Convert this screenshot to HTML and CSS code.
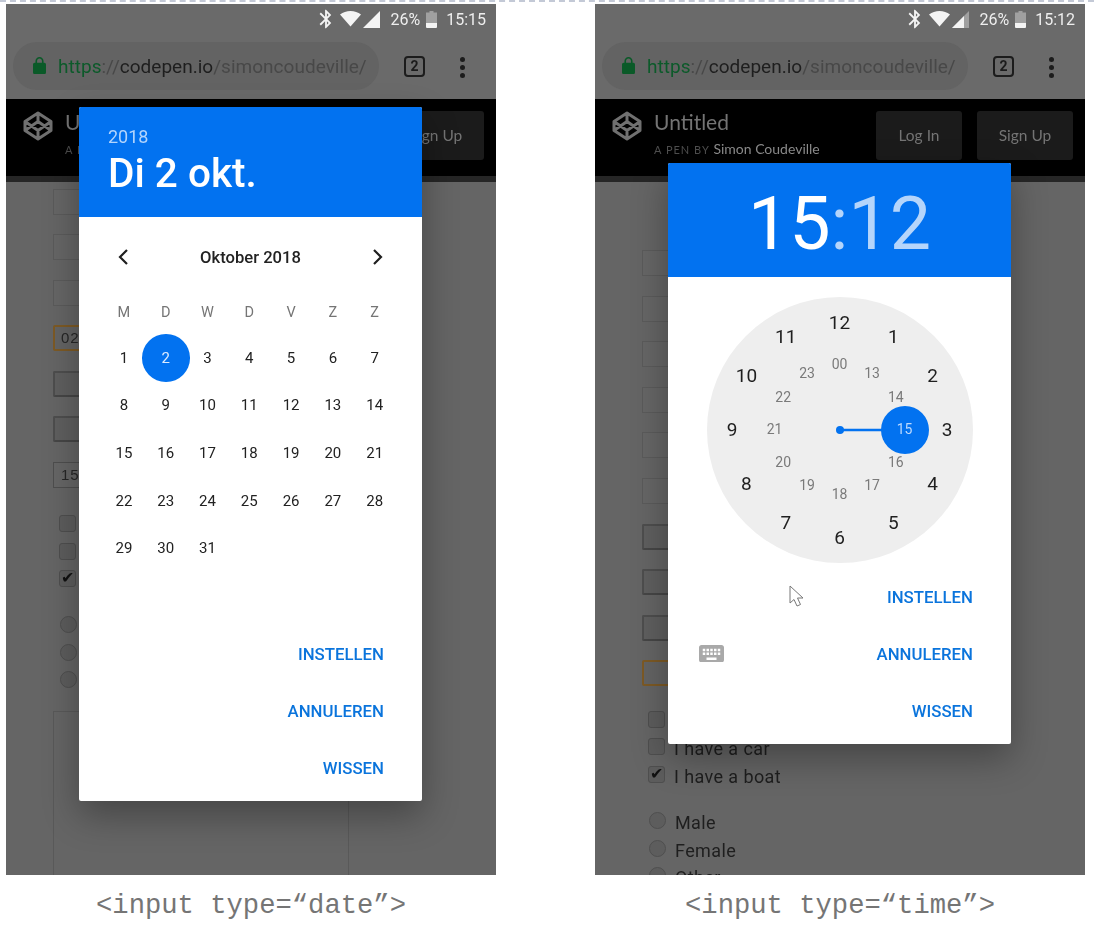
FILE: index.html
```html
<!DOCTYPE html>
<html lang="nl">
<head>
<meta charset="utf-8">
<title>input type date and time</title>
<link rel="stylesheet" href="styles.css">
</head>
<body>
<div class="guide"></div>
<main class="stage">

<section class="demo">
  <div class="phone">
    <div class="status">
      <svg class="i-bt" viewBox="0 0 24 24"><path d="M17.71 7.71L12 2h-1v7.59L6.41 5 5 6.41 10.59 12 5 17.59 6.41 19 11 14.41V22h1l5.71-5.71-4.3-4.29 4.3-4.29zM13 5.83l1.88 1.88L13 9.59V5.83zm1.88 10.46L13 18.17v-3.76l1.88 1.88z"/></svg>
      <svg class="i-wifi" viewBox="0 0 21 16"><path d="M10.5 15.5 0 3.6C3 1.2 6.500 0 10.500 0S18 1.200 21 3.600z"/></svg>
      <svg class="i-signal" viewBox="0 0 17 17"><path d="M17 0v17H0z"/></svg>
      <span class="pct">26%</span>
      <svg class="i-batt" viewBox="0 0 11 17"><path class="batt-empty" d="M3.500 0h4v1.500H11V12H0V1.500h3.500z"/><path d="M0 12h11v4a1 1 0 0 1-1 1H1a1 1 0 0 1-1-1z"/></svg>
      <span class="clock-text">15:15</span>
    </div>
    <div class="chrome">
      <div class="pill">
        <svg class="i-lock" viewBox="4 1 16 21"><path d="M18 8h-1V6c0-2.760-2.240-5-5-5S7 3.240 7 6v2H6c-1.100 0-2 .9-2 2v10c0 1.100.9 2 2 2h12c1.100 0 2-.9 2-2V10c0-1.100-.9-2-2-2zM9 6c0-1.660 1.340-3 3-3s3 1.340 3 3v2H9V6z"/></svg>
        <span class="url"><span class="u-green">https</span><span class="u-dim">://</span><span class="u-host">codepen.io</span><span class="u-dim">/simoncoudeville/</span></span>
      </div>
      <span class="tabs">2</span>
      <span class="menu"><i></i><i></i><i></i></span>
    </div>
    <header class="pen">
      <svg class="pen-logo" viewBox="0 0 30 30"><path d="M15 2 28 10.500v9L15 28 2 19.500v-9zM15 2v8.500M15 19.500V28M2 10.500l13 9 13-9M2 19.500l13-9 13 9"/></svg>
      <div class="pen-title">
        <div class="pen-name">Untitled</div>
        <div class="pen-by"><span class="pen-a">A PEN BY</span> <span class="pen-author">Simon Coudeville</span></div>
      </div>
      <span class="pen-btn pen-login">Log In</span>
      <span class="pen-btn pen-signup">Sign Up</span>
    </header>
    <div class="form form-date">
      <div class="field"></div>
      <div class="field"></div>
      <div class="field"></div>
      <div class="field focus">02-10-2018</div>
      <div class="field push"></div>
      <div class="field push"></div>
      <div class="field value">15:15</div>
      <div class="checks">
        <label class="row"><span class="box"></span>I have a bike</label>
        <label class="row"><span class="box"></span>I have a car</label>
        <label class="row"><span class="box on">✔</span>I have a boat</label>
      </div>
      <div class="radios">
        <label class="row"><span class="radio"></span>Male</label>
        <label class="row"><span class="radio"></span>Female</label>
        <label class="row"><span class="radio"></span>Other</label>
      </div>
      <div class="textarea"></div>
    </div>

    <div class="dialog dialog-date">
      <div class="d-head">
        <div class="d-year">2018</div>
        <div class="d-day">Di 2 okt.</div>
      </div>
      <div class="d-nav">
        <svg class="chev" viewBox="0 0 12 18"><path d="M10 2 3 9l7 7"/></svg>
        <span class="d-month">Oktober 2018</span>
        <svg class="chev" viewBox="0 0 12 18"><path d="M2 2l7 7-7 7"/></svg>
      </div>
      <div class="week">
        <span>M</span><span>D</span><span>W</span><span>D</span><span>V</span><span>Z</span><span>Z</span>
      </div>
      <div class="days">
        <span>1</span><span class="sel">2</span><span>3</span><span>4</span><span>5</span><span>6</span><span>7</span>
        <span>8</span><span>9</span><span>10</span><span>11</span><span>12</span><span>13</span><span>14</span>
        <span>15</span><span>16</span><span>17</span><span>18</span><span>19</span><span>20</span><span>21</span>
        <span>22</span><span>23</span><span>24</span><span>25</span><span>26</span><span>27</span><span>28</span>
        <span>29</span><span>30</span><span>31</span>
      </div>
      <div class="actions">
        <div class="act">INSTELLEN</div>
        <div class="act">ANNULEREN</div>
        <div class="act">WISSEN</div>
      </div>
    </div>
  </div>
  <p class="caption">&lt;input type=“date”&gt;</p>
</section>

<section class="demo">
  <div class="phone">
    <div class="status">
      <svg class="i-bt" viewBox="0 0 24 24"><path d="M17.71 7.71L12 2h-1v7.59L6.41 5 5 6.41 10.59 12 5 17.59 6.41 19 11 14.41V22h1l5.71-5.71-4.3-4.29 4.3-4.29zM13 5.83l1.88 1.88L13 9.59V5.83zm1.88 10.46L13 18.17v-3.76l1.88 1.88z"/></svg>
      <svg class="i-wifi" viewBox="0 0 21 16"><path d="M10.5 15.5 0 3.600C3 1.200 6.500 0 10.500 0S18 1.200 21 3.600z"/></svg>
      <svg class="i-signal" viewBox="0 0 17 17"><path class="batt-empty" d="M17 0v17H0z"/><path d="M12 5v12H0z"/></svg>
      <span class="pct">26%</span>
      <svg class="i-batt" viewBox="0 0 11 17"><path class="batt-empty" d="M3.500 0h4v1.500H11V12H0V1.500h3.500z"/><path d="M0 12h11v4a1 1 0 0 1-1 1H1a1 1 0 0 1-1-1z"/></svg>
      <span class="clock-text">15:12</span>
    </div>
    <div class="chrome">
      <div class="pill">
        <svg class="i-lock" viewBox="4 1 16 21"><path d="M18 8h-1V6c0-2.760-2.240-5-5-5S7 3.240 7 6v2H6c-1.100 0-2 .9-2 2v10c0 1.100.9 2 2 2h12c1.100 0 2-.9 2-2V10c0-1.100-.9-2-2-2zM9 6c0-1.660 1.340-3 3-3s3 1.340 3 3v2H9V6z"/></svg>
        <span class="url"><span class="u-green">https</span><span class="u-dim">://</span><span class="u-host">codepen.io</span><span class="u-dim">/simoncoudeville/</span></span>
      </div>
      <span class="tabs">2</span>
      <span class="menu"><i></i><i></i><i></i></span>
    </div>
    <header class="pen">
      <svg class="pen-logo" viewBox="0 0 30 30"><path d="M15 2 28 10.500v9L15 28 2 19.500v-9zM15 2v8.500M15 19.500V28M2 10.500l13 9 13-9M2 19.500l13-9 13 9"/></svg>
      <div class="pen-title">
        <div class="pen-name">Untitled</div>
        <div class="pen-by"><span class="pen-a">A PEN BY</span> <span class="pen-author">Simon Coudeville</span></div>
      </div>
      <span class="pen-btn pen-login">Log In</span>
      <span class="pen-btn pen-signup">Sign Up</span>
    </header>
    <div class="form form-time">
      <div class="field"></div>
      <div class="field"></div>
      <div class="field"></div>
      <div class="field"></div>
      <div class="field"></div>
      <div class="field"></div>
      <div class="field push"></div>
      <div class="field push"></div>
      <div class="field push"></div>
      <div class="field focus"></div>
      <div class="checks">
        <label class="row"><span class="box"></span>I have a bike</label>
        <label class="row"><span class="box"></span>I have a car</label>
        <label class="row"><span class="box on">✔</span>I have a boat</label>
      </div>
      <div class="radios">
        <label class="row"><span class="radio"></span>Male</label>
        <label class="row"><span class="radio"></span>Female</label>
        <label class="row"><span class="radio"></span>Other</label>
      </div>
    </div>

    <div class="dialog dialog-time">
      <div class="t-head"><span>15</span><span class="t-dim">:12</span></div>
      <div class="dial">
        <svg class="hand" viewBox="0 0 266 266"><circle cx="133" cy="133" r="4"/><path d="M133 133h65"/><circle cx="198" cy="133" r="24"/></svg>
        <span class="n" style="left:133px;top:25.500px">12</span>
        <span class="n" style="left:186.750px;top:39.900px">1</span>
        <span class="n" style="left:226.100px;top:79.250px">2</span>
        <span class="n" style="left:240.500px;top:133px">3</span>
        <span class="n" style="left:226.100px;top:186.750px">4</span>
        <span class="n" style="left:186.750px;top:226.100px">5</span>
        <span class="n" style="left:133px;top:240.500px">6</span>
        <span class="n" style="left:79.250px;top:226.100px">7</span>
        <span class="n" style="left:39.900px;top:186.750px">8</span>
        <span class="n" style="left:25.500px;top:133px">9</span>
        <span class="n" style="left:39.900px;top:79.250px">10</span>
        <span class="n" style="left:79.250px;top:39.900px">11</span>
        <span class="n m" style="left:133px;top:68px">00</span>
        <span class="n m" style="left:165.500px;top:76.700px">13</span>
        <span class="n m" style="left:189.300px;top:100.500px">14</span>
        <span class="n m cur" style="left:198px;top:133px">15</span>
        <span class="n m" style="left:189.300px;top:165.500px">16</span>
        <span class="n m" style="left:165.500px;top:189.300px">17</span>
        <span class="n m" style="left:133px;top:198px">18</span>
        <span class="n m" style="left:100.500px;top:189.300px">19</span>
        <span class="n m" style="left:76.700px;top:165.500px">20</span>
        <span class="n m" style="left:68px;top:133px">21</span>
        <span class="n m" style="left:76.700px;top:100.500px">22</span>
        <span class="n m" style="left:100.500px;top:76.700px">23</span>
      </div>
      <div class="actions actions-time">
        <div class="act">INSTELLEN</div>
        <div class="act act-kb">
          <svg class="i-kb" viewBox="2 5 20 14"><path d="M20 5H4c-1.100 0-1.990.9-1.990 2L2 17c0 1.100.9 2 2 2h16c1.100 0 2-.9 2-2V7c0-1.100-.9-2-2-2zm-9 3h2v2h-2V8zm0 3h2v2h-2v-2zM8 8h2v2H8V8zm0 3h2v2H8v-2zm-1 2H5v-2h2v2zm0-3H5V8h2v2zm9 7H8v-2h8v2zm0-4h-2v-2h2v2zm0-3h-2V8h2v2zm3 3h-2v-2h2v2zm0-3h-2V8h2v2z"/></svg>
          <span>ANNULEREN</span>
        </div>
        <div class="act">WISSEN</div>
      </div>
      <svg class="cursor" viewBox="0 0 15 23"><path d="M1 1v17l4-3.500 3 6.500 3.500-1.500-3-6.500H14z"/></svg>
    </div>
  </div>
  <p class="caption">&lt;input type=“time”&gt;</p>
</section>

</main>
</body>
</html>
```

FILE: styles.css
```css
* { box-sizing: border-box; }
html, body { margin: 0; padding: 0; }
body {
  width: 1094px;
  height: 932px;
  overflow: hidden;
  background: #fff;
  font-family: Roboto, "Noto Sans", sans-serif;
}
.guide {
  height: 4px;
  border-top: 2px dashed #c3c9d6;
  background: #fff;
}
.stage {
  display: flex;
  gap: 99px;
  padding-left: 6px;
}
.demo { width: 490px; }
.phone {
  position: relative;
  height: 871px;
  background: #6a6a6a;
  display: flex;
  flex-direction: column;
  overflow: hidden;
  filter: blur(.35px);
}
.caption {
  margin: 15px -6px 0;
  text-align: center;
  font: 27.200px/32px "Liberation Mono", monospace;
  color: #757575;
}

/* status bar */
.status {
  height: 38px;
  flex: none;
  display: flex;
  align-items: center;
  justify-content: flex-end;
  padding: 0 10px 8px 0;
  color: #eee;
  fill: #f4f4f4;
  font-size: 16px;
}
.i-bt { width: 22px; height: 22px; margin-right: 3px; }
.i-wifi { width: 21px; height: 16px; margin-right: 2px; }
.i-signal { width: 17px; height: 17px; margin-right: 10px; }
.i-batt { width: 11px; height: 17px; margin: 0 9px 0 6px; }
.batt-empty { fill: #a0a0a0; }

/* browser chrome */
.chrome {
  height: 57px;
  flex: none;
  display: flex;
  align-items: flex-start;
  padding-left: 7px;
}
.pill {
  width: 366px;
  height: 48px;
  border-radius: 24px;
  background: #636363;
  display: flex;
  align-items: center;
  padding-left: 20px;
}
.i-lock { width: 13px; height: 17px; fill: #0a5a28; margin: 0 12px 1px 0; flex: none; }
.url { font-size: 19px; white-space: nowrap; letter-spacing: .02px; }
.u-green { color: #0c5a2a; }
.u-dim { color: #484848; }
.u-host { color: #1e1e1e; }
.tabs {
  width: 21px;
  height: 21px;
  margin: 14px 0 0 25px;
  border: 2px solid #1c1c1c;
  border-radius: 4px;
  font-size: 14px;
  font-weight: 700;
  line-height: 17px;
  text-align: center;
  color: #1c1c1c;
}
.menu {
  margin: 15px 0 0 35px;
  display: flex;
  flex-direction: column;
  gap: 3px;
}
.menu i {
  display: block;
  width: 5px;
  height: 5px;
  border-radius: 50%;
  background: #1c1c1c;
}

/* pen header */
.pen {
  height: 83px;
  flex: none;
  background: #000;
  border-bottom: 6px solid #262626;
  display: flex;
  align-items: flex-start;
  font-family: Lato, sans-serif;
}
.pen-logo {
  width: 30px;
  height: 30px;
  margin: 12px 12px 0 17px;
  fill: none;
  stroke: #707070;
  stroke-width: 3;
  stroke-linejoin: round;
}
.pen-title { width: 222px; padding-top: 9px; }
.pen-name { font-size: 21px; line-height: 28px; color: #747474; }
.pen-by { font-size: 14px; line-height: 20px; margin-top: 3px; }
.pen-a { font-size: 11px; letter-spacing: 1px; color: #4f4f4f; }
.pen-author { color: #8c8c8c; }
.pen-btn {
  height: 49px;
  margin-top: 12px;
  border-radius: 3px;
  background: #1b1b1b;
  color: #747474;
  font-size: 15.500px;
  line-height: 48px;
  text-align: center;
}
.pen-login { width: 86px; }
.pen-signup { width: 96px; margin-left: 15px; }

/* form behind the dialog */
.form {
  flex: 1;
  min-height: 0;
  overflow: hidden;
  background: #656565;
  padding-left: 47px;
}
.form-date { padding-top: 6.500px; }
.form-time { padding-top: 68px; }
.field {
  width: 296px;
  height: 26px;
  margin-bottom: 19.600px;
  border: 1px solid #5b5b5b;
  border-right: 0;
  background: #666;
  font: 15px/24px "Liberation Sans", sans-serif;
  letter-spacing: 1px;
  color: #262626;
  padding-left: 7px;
}
.field.push { border: 2px solid #4e4e4e; border-bottom-color: #464646; background: #5f5f5f; border-radius: 2px; }
.field.focus { border: 2px solid #7d5a25; background: #646464; border-radius: 2px; line-height: 22px; padding-left: 6px; }
.field.value { border: 1px solid #4e4e4e; }
.checks { margin-top: 24px; margin-left: 6px; }
.form-time .checks { margin-top: 21px; }
.radios { margin-top: 18.500px; margin-left: 7px; }
.form-time .radios { margin-top: 19px; }
.row {
  display: flex;
  align-items: center;
  height: 27.500px;
  font-size: 18px;
  letter-spacing: .4px;
  color: #1e1e1e;
}
.box {
  width: 17px;
  height: 17px;
  margin: -4px 9px 0 0;
  border: 1px solid #4f4f4f;
  border-radius: 3px;
  background: #5d5d5d;
  font-size: 16px;
  line-height: 14px;
  text-align: center;
  letter-spacing: 0;
  color: #111;
  flex: none;
}
.radio {
  width: 17px;
  height: 17px;
  margin: -4px 9px 0 0;
  border: 1px solid #4f4f4f;
  border-radius: 50%;
  background: #5d5d5d;
  flex: none;
}
.textarea {
  width: 296px;
  height: 170px;
  margin-top: 15px;
  border: 1px solid #595959;
}

/* dialogs */
.dialog {
  position: absolute;
  width: 343px;
  left: 73px;
  background: #fff;
  border-radius: 2px;
  box-shadow: 0 14px 36px rgba(0, 0, 0, .32);
  display: flex;
  flex-direction: column;
}
.dialog-date { top: 103px; height: 694px; }
.dialog-time { top: 159px; height: 581px; }
.d-head {
  height: 110px;
  flex: none;
  background: #0272f0;
  padding: 19px 29px 0;
  border-radius: 2px 2px 0 0;
}
.d-year { font-size: 18px; line-height: 22px; color: #b3d4fc; }
.d-day { font-size: 40.500px; font-weight: 500; line-height: 44px; margin-top: 3px; color: #fff; }
.d-nav {
  height: 80px;
  flex: none;
  padding: 0 38px;
  display: flex;
  align-items: center;
  justify-content: space-between;
}
.chev { width: 12px; height: 18px; fill: none; stroke: #1f1f1f; stroke-width: 2.200; }
.d-month { font-size: 16.600px; font-weight: 500; color: #222; }
.week, .days {
  display: grid;
  grid-template-columns: repeat(7, 41.800px);
  padding-left: 24px;
  text-align: center;
}
.week { height: 37px; font-size: 14.500px; line-height: 32px; color: #757575; }
.days { grid-auto-rows: 47.600px; font-size: 15px; color: #222; }
.days span { display: flex; align-items: center; justify-content: center; }
.days .sel {
  justify-self: center;
  width: 47.600px;
  border-radius: 50%;
  background: #0272f0;
  color: #dcebff;
}
.actions { margin-top: auto; padding: 0 38px 5px 39px; }
.act {
  height: 57px;
  display: flex;
  align-items: center;
  justify-content: flex-end;
  font-size: 16.800px;
  font-weight: 500;
  color: #0a74dc;
}
.act-kb { justify-content: space-between; margin-left: -8px; }
.i-kb { width: 25px; height: 17.500px; fill: #a9a9a9; }

.t-head {
  height: 114px;
  flex: none;
  background: #0272f0;
  border-radius: 2px 2px 0 0;
  font-size: 73.500px;
  line-height: 122px;
  text-align: center;
  color: #fff;
}
.t-dim { color: #b5d5fb; }
.dial {
  position: relative;
  width: 266px;
  height: 266px;
  margin: 20px 0 0 38.500px;
  flex: none;
  border-radius: 50%;
  background: #eee;
}
.hand { position: absolute; inset: 0; fill: #0272f0; stroke: #0272f0; stroke-width: 2.500; }
.hand circle { stroke: none; }
.n {
  position: absolute;
  transform: translate(-50%, calc(-50% - 1px));
  font-size: 19px;
  line-height: 1;
  color: #1f1f1f;
}
.n.m { font-size: 14px; color: #7a7a7a; }
.n.cur { color: #bcd9fd; }
.cursor {
  position: absolute;
  left: 121px;
  top: 422px;
  width: 15px;
  height: 23px;
  fill: #fff;
  stroke: #777;
  stroke-width: 1;
}
```
